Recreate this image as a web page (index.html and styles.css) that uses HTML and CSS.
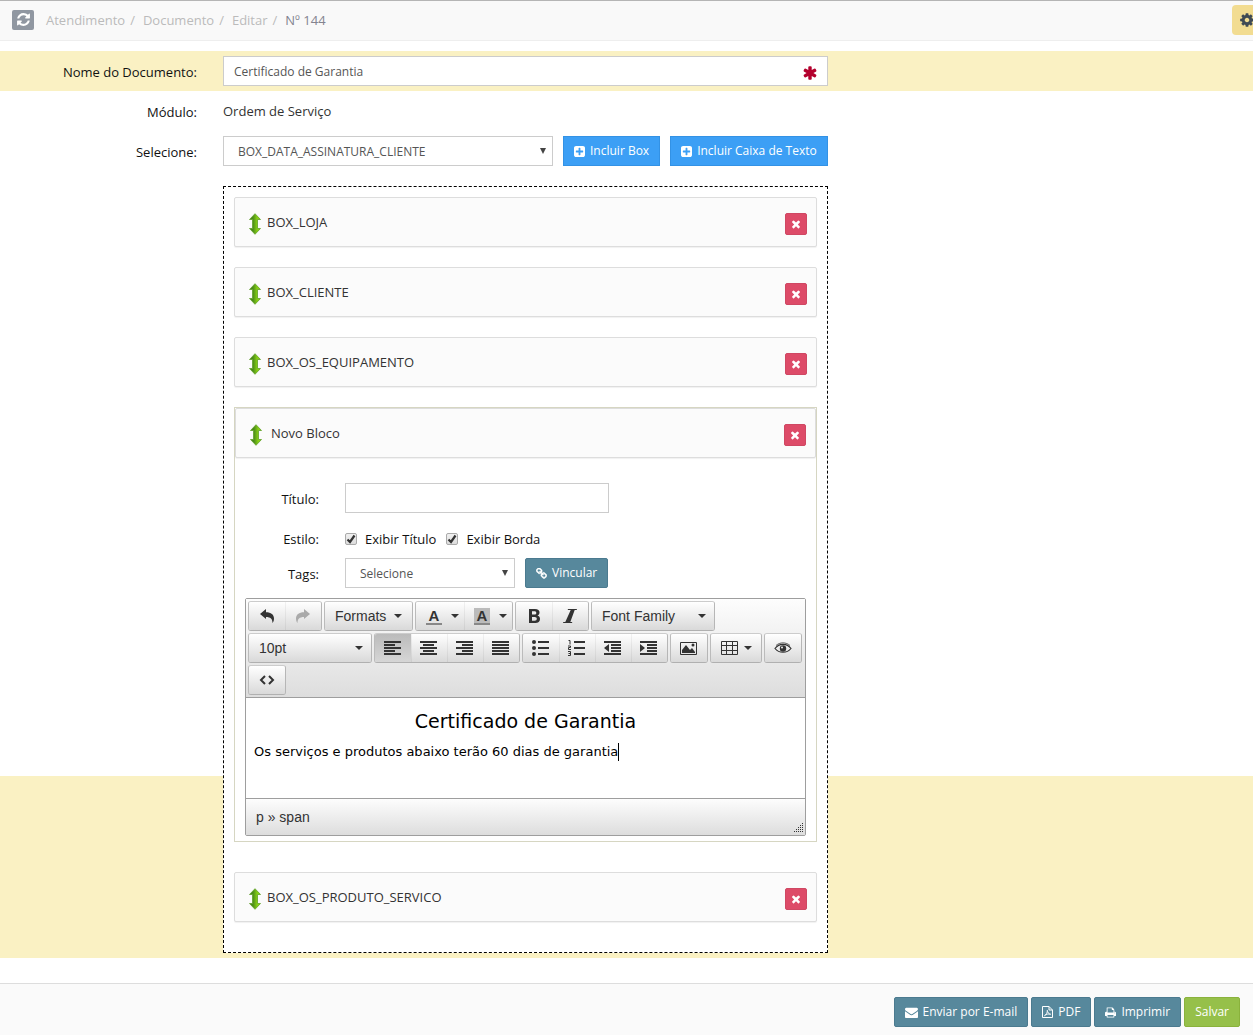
FILE: index.html
```html
<!DOCTYPE html>
<html lang="pt-BR">
<head>
<meta charset="utf-8">
<title>Documento Nº 144</title>
<meta name="viewport" content="width=device-width, initial-scale=1">
<link rel="stylesheet" href="styles.css">
</head>
<body>
<svg class="sprite" aria-hidden="true">
  <defs>
    <linearGradient id="green" x1="0" y1="0" x2="1" y2="0"><stop offset="0.3" stop-color="#4a8a1a"/><stop offset="0.7" stop-color="#86cf14"/></linearGradient>
  </defs>
  <symbol id="refresh" viewBox="0 0 1792 1792"><path d="M1639 1056q0 5-1 7-64 268-268 434.500t-478 166.500q-146 0-282.500-55t-243.500-157l-129 129q-19 19-45 19t-45-19-19-45v-448q0-26 19-45t45-19h448q26 0 45 19t19 45-19 45l-137 137q71 66 161 102t187 36q134 0 250-65t186-179q11-17 53-117 8-23 30-23h192q13 0 22.500 9.500t9.500 22.500zm25-800v448q0 26-19 45t-45 19h-448q-26 0-45-19t-19-45 19-45l138-138q-148-137-349-137-134 0-250 65t-186 179q-11 17-53 117-8 23-30 23h-199q-13 0-22.500-9.500t-9.500-22.500v-7q65-268 270-434.500t480-166.500q146 0 284 55.500t245 156.500l130-129q19-19 45-19t45 19 19 45z"/></symbol>
  <symbol id="cog" viewBox="0 0 1792 1792"><path d="M1152 896q0-106-75-181t-181-75-181 75-75 181 75 181 181 75 181-75 75-181zm512-109v222q0 12-8 23t-20 13l-185 28q-19 54-39 91 35 50 107 138 10 12 10 25t-9 23q-27 37-99 108t-94 71q-12 0-26-9l-138-108q-44 23-91 38-16 136-29 186-7 28-36 28h-222q-14 0-24.500-8.500t-11.500-21.500l-28-184q-49-16-90-37l-141 107q-10 9-25 9-14 0-25-11-126-114-165-168-7-10-7-23 0-12 8-23 15-21 51-66.500t54-70.500q-27-50-41-99l-183-27q-13-2-21-12.500t-8-23.500v-222q0-12 8-23t19-13l186-28q14-46 39-92-40-57-107-138-10-12-10-24 0-10 9-23 26-36 98.500-107.500t94.500-71.500q13 0 26 10l138 107q44-23 91-38 16-136 29-186 7-28 36-28h222q14 0 24.500 8.500t11.500 21.500l28 184q49 16 90 37l142-107q9-9 24-9 13 0 25 10 129 119 165 170 7 8 7 22 0 12-8 23-15 21-51 66.500t-54 70.500q26 50 41 98l183 28q13 2 21 12.500t8 23.500z"/></symbol>
  <symbol id="asterisk" viewBox="0 0 1792 1792"><path d="M1546 1050q46 26 59.500 77.500t-12.500 97.500l-64 110q-26 46-77.500 59.500t-97.500-12.500l-266-153v307q0 52-38 90t-90 38h-128q-52 0-90-38t-38-90v-307l-266 153q-46 26-97.500 12.500t-77.500-59.500l-64-110q-26-46-12.500-97.500t59.500-77.500l266-154-266-154q-46-26-59.500-77.500t12.500-97.500l64-110q26-46 77.500-59.500t97.500 12.500l266 153v-307q0-52 38-90t90-38h128q52 0 90 38t38 90v307l266-153q46-26 97.500-12.500t77.500 59.500l64 110q26 46 12.500 97.500t-59.500 77.500l-266 154z"/></symbol>
  <symbol id="plus" viewBox="128 128 1536 1536"><path d="M1408 960v-128q0-26-19-45t-45-19h-320v-320q0-26-19-45t-45-19h-128q-26 0-45 19t-19 45v320h-320q-26 0-45 19t-19 45v128q0 26 19 45t45 19h320v320q0 26 19 45t45 19h128q26 0 45-19t19-45v-320h320q26 0 45-19t19-45zm256-544v960q0 119-84.500 203.500t-203.500 84.500h-960q-119 0-203.500-84.500t-84.500-203.500v-960q0-119 84.500-203.500t203.500-84.500h960q119 0 203.500 84.500t84.500 203.500z"/></symbol>
  <symbol id="times" viewBox="0 0 1792 1792"><path d="M1490 1322q0 40-28 68l-136 136q-28 28-68 28t-68-28l-294-294-294 294q-28 28-68 28t-68-28l-136-136q-28-28-28-68t28-68l294-294-294-294q-28-28-28-68t28-68l136-136q28-28 68-28t68 28l294 294 294-294q28-28 68-28t68 28l136 136q28 28 28 68t-28 68l-294 294 294 294q28 28 28 68z"/></symbol>
  <symbol id="chain" viewBox="64 64 1664 1664"><path d="M1520 1216q0-40-28-68l-208-208q-28-28-68-28-42 0-72 32 3 3 19 18.500t21.500 21.500 15 19 13 25.500 3.500 27.500q0 40-28 68t-68 28q-15 0-27.500-3.500t-25.500-13-19-15-21.500-21.500-18.500-19q-33 31-33 73 0 40 28 68l206 207q27 27 68 27 40 0 68-26l147-146q28-28 28-67zm-703-705q0-40-28-68l-206-207q-28-28-68-28-39 0-68 27l-147 146q-28 28-28 67 0 40 28 68l208 208q27 27 68 27 42 0 72-31-3-3-19-18.500t-21.500-21.500-15-19-13-25.500-3.500-27.500q0-40 28-68t68-28q15 0 27.500 3.500t25.500 13 19 15 21.500 21.500 18.500 19q33-31 33-73zm895 705q0 120-85 203l-147 146q-83 83-203 83-121 0-204-85l-206-207q-83-83-83-203 0-123 88-209l-88-88q-86 88-208 88-120 0-204-84l-208-208q-84-84-84-204t85-203l147-146q83-83 203-83 121 0 204 85l206 207q83 83 83 203 0 123-88 209l88 88q86-88 208-88 120 0 204 84l208 208q84 84 84 204z" stroke="currentColor" stroke-width="60"/></symbol>
  <symbol id="envelope" viewBox="0 0 1792 1792"><path d="M1792 710v794q0 66-47 113t-113 47h-1472q-66 0-113-47t-47-113v-794q44 49 101 87 362 246 497 345 57 42 92.500 65.500t94.500 48 110 24.500h2q51 0 110-24.500t94.500-48 92.500-65.500q170-123 498-345 57-39 100-87zm0-294q0 79-49 151t-122 123q-376 261-468 325-10 7-42.500 31t-54 38.500-52 32.500-57.500 27-50 9h-2q-23 0-50-9t-57.500-27-52-32.500-54-38.500-42.500-31q-91-64-262-182.500t-205-142.500q-62-42-117-115.500t-55-136.500q0-78 41.500-130t118.500-52h1472q65 0 112.500 47t47.500 113z"/></symbol>
  <symbol id="print" viewBox="64 64 1664 1664"><path d="M448 1536h896v-256h-896v256zm0-640h896v-384h-160q-40 0-68-28t-28-68v-160h-640v640zm1152 64q0-26-19-45t-45-19-45 19-19 45 19 45 45 19 45-19 19-45zm128 0v416q0 13-9.500 22.500t-22.500 9.500h-224v160q0 40-28 68t-68 28h-960q-40 0-68-28t-28-68v-160h-224q-13 0-22.500-9.500t-9.500-22.500v-416q0-79 56.500-135.500t135.500-56.500h64v-544q0-40 28-68t68-28h672q40 0 88 20t76 48l152 152q28 28 48 76t20 88v256h64q79 0 135.500 56.500t56.500 135.500z"/></symbol>
  <symbol id="pdf" viewBox="0 0 11 12"><path d="M.5.500H7L10.500 4v7.500H.5zM7 .5V4h3.500" fill="none" stroke="currentColor"/><path d="M2.500 9.800c2-1.200 3-3.500 2.800-5.500M5.300 4.300c.2 2.200 1.600 3.800 3.400 4M2.500 9.500c1.500-1.400 4-1.800 6.200-1.300" fill="none" stroke="currentColor" stroke-width=".9"/></symbol>
  <symbol id="updown" viewBox="0 0 12 22"><path d="M6 .7L11.500 6.500H8.500V15.500H11.500L6 21.300.5 15.500H3.500V6.500H.5z" fill="url(#green)" stroke="#5f9f28" stroke-width=".8"/></symbol>
  <symbol id="undo" viewBox="0 0 16 16"><path d="M1 6l6-5v3.200c5 0 8 2.300 8 6.300 0 2-.7 3.500-1.600 4.500.3-4-2-6-6.400-6V11z"/></symbol>
  <symbol id="left" viewBox="1 0 18 16"><path d="M1 1h17v2H1zM1 4h11v2H1zM1 7h17v2H1zM1 10h11v2H1zM1 13h17v2H1z"/></symbol>
  <symbol id="center" viewBox="1 0 18 16"><path d="M1 1h17v2H1zM4 4h11v2H4zM1 7h17v2H1zM4 10h11v2H4zM1 13h17v2H1z"/></symbol>
  <symbol id="right" viewBox="1 0 18 16"><path d="M1 1h17v2H1zM7 4h11v2H7zM1 7h17v2H1zM7 10h11v2H7zM1 13h17v2H1z"/></symbol>
  <symbol id="justify" viewBox="1 0 18 16"><path d="M1 1h17v2H1zM1 4h17v2H1zM1 7h17v2H1zM1 10h17v2H1zM1 13h17v2H1z"/></symbol>
  <symbol id="bullets" viewBox="1 0 18 16"><circle cx="3" cy="2" r="2"/><circle cx="3" cy="8" r="2"/><circle cx="3" cy="14" r="2"/><path d="M7 1h11v2H7zM7 7h11v2H7zM7 13h11v2H7z"/></symbol>
  <symbol id="numbers" viewBox="1 0 18 16"><path d="M7 1h11v2H7zM7 7h11v2H7zM7 13h11v2H7z"/><path d="M1.500.5H3v4M1 6h2.500v1.500H1.500V9.500H4M1 11.500h2.500v4H1M1.500 13.500h2" fill="none" stroke="currentColor"/></symbol>
  <symbol id="outdent" viewBox="1 0 18 16"><path d="M1 1h17v2H1zM8 4h10v2H8zM8 7h10v2H8zM8 10h10v2H8zM1 13h17v2H1zM6 4v8L1 8z"/></symbol>
  <symbol id="indent" viewBox="1 0 18 16"><path d="M1 1h17v2H1zM8 4h10v2H8zM8 7h10v2H8zM8 10h10v2H8zM1 13h17v2H1zM1 4v8l5-4z"/></symbol>
  <symbol id="image" viewBox="1 0 18 16"><path d="M1.500 2.500h16v12h-16z" fill="none" stroke="currentColor"/><path d="M3 13V10l4-5 4 5 2-2 3 4v1z"/><circle cx="14" cy="5" r="1.500"/></symbol>
  <symbol id="table" viewBox="1 0 18 16"><path d="M1.500 1.500h16v13h-16zM1.500 5.500h16M1.500 10.500h16M6.500 1.500v13M12.500 1.500v13" fill="none" stroke="currentColor"/></symbol>
  <symbol id="eye" viewBox="0 0 18 16"><path d="M1 8.500C5 3 13 3 17 8.500 13 13.500 5 13.500 1 8.500z" fill="none" stroke="currentColor" stroke-width="1.200"/><circle cx="9" cy="8.500" r="3.200"/><circle cx="8" cy="7.500" r="1" fill="#eee"/><path d="M2 5.500C6 2 12 2 16 5.500" fill="none" stroke="currentColor" stroke-width=".8"/></symbol>
  <symbol id="code" viewBox="0 0 18 16"><path d="M7 4L3 8l4 4M11 4l4 4-4 4" fill="none" stroke="currentColor" stroke-width="2"/></symbol>
  <symbol id="bold" viewBox="0 0 16 16"><path fill-rule="evenodd" d="M3 1h6c3 0 4.500 1.400 4.500 3.600 0 1.500-.8 2.500-2 3 1.600.5 2.500 1.700 2.500 3.400C14 13.500 12.300 15 9.300 15H3zM6 3.300v3.300h2.300c1.300 0 2-.6 2-1.700s-.7-1.600-2-1.600zM6 8.900v3.800h2.600c1.500 0 2.200-.7 2.200-1.900s-.7-1.900-2.200-1.900z"/></symbol>
  <symbol id="italic" viewBox="0 0 16 16"><path d="M6 1h9l-.3 1h-2L8.300 14h2l-.3 1H1l.3-1h2L8.700 2h-3z"/></symbol>
</svg>

<header class="topbar">
  <button class="refresh" type="button" aria-label="Atualizar"><svg><use href="#refresh"/></svg></button>
  <nav class="crumbs" aria-label="Trilha">
    <a href="#">Atendimento</a><span class="sep">/</span>
    <a href="#">Documento</a><span class="sep">/</span>
    <a href="#">Editar</a><span class="sep">/</span>
    <span class="current">Nº 144</span>
  </nav>
  <button class="settings" type="button" aria-label="Configurações"><svg><use href="#cog"/></svg></button>
</header>

<main class="form">
  <div class="row row-highlight">
    <label class="label" for="nome">Nome do Documento:</label>
    <div class="field required">
      <input class="input" id="nome" type="text" value="Certificado de Garantia" required>
      <svg><use href="#asterisk"/></svg>
    </div>
  </div>
  <div class="row">
    <span class="label">Módulo:</span>
    <span class="value">Ordem de Serviço</span>
  </div>
  <div class="row">
    <label class="label" for="box">Selecione:</label>
    <div class="field controls">
      <div class="select select-wide"><select id="box"><option>BOX_DATA_ASSINATURA_CLIENTE</option></select></div>
      <button class="btn btn-blue" type="button"><svg><use href="#plus"/></svg>Incluir Box</button>
      <button class="btn btn-blue" type="button"><svg><use href="#plus"/></svg>Incluir Caixa de Texto</button>
    </div>
  </div>
  <div class="row row-zone">
    <section class="zone" aria-label="Blocos do documento">
      <div class="card"><svg class="handle"><use href="#updown"/></svg><span class="card-name">BOX_LOJA</span><button class="remove" type="button" aria-label="Remover"><svg><use href="#times"/></svg></button></div>
      <div class="card"><svg class="handle"><use href="#updown"/></svg><span class="card-name">BOX_CLIENTE</span><button class="remove" type="button" aria-label="Remover"><svg><use href="#times"/></svg></button></div>
      <div class="card"><svg class="handle"><use href="#updown"/></svg><span class="card-name">BOX_OS_EQUIPAMENTO</span><button class="remove" type="button" aria-label="Remover"><svg><use href="#times"/></svg></button></div>

      <div class="block">
        <div class="card card-head"><svg class="handle"><use href="#updown"/></svg><span class="card-name">Novo Bloco</span><button class="remove" type="button" aria-label="Remover"><svg><use href="#times"/></svg></button></div>
        <div class="block-form">
          <div class="block-row">
            <label class="label" for="titulo">Título:</label>
            <input class="input input-title" id="titulo" type="text">
          </div>
          <div class="block-row block-row-checks">
            <span class="label">Estilo:</span>
            <div class="checks">
              <label class="check"><input type="checkbox" checked>Exibir Título</label>
              <label class="check"><input type="checkbox" checked>Exibir Borda</label>
            </div>
          </div>
          <div class="block-row">
            <label class="label" for="tags">Tags:</label>
            <div class="controls">
              <div class="select select-tags"><select id="tags"><option>Selecione</option></select></div>
              <button class="btn btn-teal" type="button"><svg><use href="#chain"/></svg>Vincular</button>
            </div>
          </div>
        </div>

        <div class="editor">
          <div class="toolbar" role="toolbar">
            <div class="group">
              <button type="button" aria-label="Desfazer"><svg class="glyph"><use href="#undo"/></svg></button>
              <button type="button" aria-label="Refazer" disabled><svg class="glyph flip"><use href="#undo"/></svg></button>
            </div>
            <div class="group"><button class="menu menu-formats" type="button">Formats<i class="caret"></i></button></div>
            <div class="group">
              <button class="color" type="button" aria-label="Cor do texto"><b class="swatch">A</b><i class="caret"></i></button>
              <button class="color" type="button" aria-label="Cor de fundo"><b class="swatch swatch-back">A</b><i class="caret"></i></button>
            </div>
            <div class="group">
              <button type="button" aria-label="Negrito"><svg class="glyph"><use href="#bold"/></svg></button>
              <button type="button" aria-label="Itálico"><svg class="glyph"><use href="#italic"/></svg></button>
            </div>
            <div class="group"><button class="menu menu-fixed" type="button">Font Family<i class="caret"></i></button></div>
            <div class="group"><button class="menu menu-fixed" type="button">10pt<i class="caret"></i></button></div>
            <div class="group">
              <button class="active" type="button" aria-label="Alinhar à esquerda"><svg class="glyph"><use href="#left"/></svg></button>
              <button type="button" aria-label="Centralizar"><svg class="glyph"><use href="#center"/></svg></button>
              <button type="button" aria-label="Alinhar à direita"><svg class="glyph"><use href="#right"/></svg></button>
              <button type="button" aria-label="Justificar"><svg class="glyph"><use href="#justify"/></svg></button>
            </div>
            <div class="group">
              <button type="button" aria-label="Marcadores"><svg class="glyph"><use href="#bullets"/></svg></button>
              <button type="button" aria-label="Numeração"><svg class="glyph"><use href="#numbers"/></svg></button>
              <button type="button" aria-label="Diminuir recuo"><svg class="glyph"><use href="#outdent"/></svg></button>
              <button type="button" aria-label="Aumentar recuo"><svg class="glyph"><use href="#indent"/></svg></button>
            </div>
            <div class="group"><button type="button" aria-label="Imagem"><svg class="glyph"><use href="#image"/></svg></button></div>
            <div class="group"><button class="table" type="button" aria-label="Tabela"><svg class="glyph"><use href="#table"/></svg><i class="caret"></i></button></div>
            <div class="group"><button type="button" aria-label="Visualizar"><svg class="glyph"><use href="#eye"/></svg></button></div>
            <div class="group"><button type="button" aria-label="Código-fonte"><svg class="glyph"><use href="#code"/></svg></button></div>
          </div>
          <div class="canvas" contenteditable="true" spellcheck="false">
            <p class="doc-title">Certificado de Garantia</p>
            <p class="doc-text"><span class="typed">Os serviços e produtos abaixo terão 60 dias de garantia</span></p>
          </div>
          <div class="status">
            <span>p » span</span>
            <svg class="grip" viewBox="0 0 10 10"><path d="M9 .5h1M7 2.500h1M9 2.500h1M5 4.500h1M7 4.500h1M9 4.500h1M3 6.500h1M5 6.500h1M7 6.500h1M9 6.500h1M1 8.500h1M3 8.500h1M5 8.500h1M7 8.500h1M9 8.500h1" stroke="#333" fill="none"/></svg>
          </div>
        </div>
      </div>

      <div class="card"><svg class="handle"><use href="#updown"/></svg><span class="card-name">BOX_OS_PRODUTO_SERVICO</span><button class="remove" type="button" aria-label="Remover"><svg><use href="#times"/></svg></button></div>
    </section>
  </div>
</main>

<footer class="actions">
  <button class="btn btn-teal" type="button"><svg class="wide"><use href="#envelope"/></svg>Enviar por E-mail</button>
  <button class="btn btn-teal" type="button"><svg class="tall"><use href="#pdf"/></svg>PDF</button>
  <button class="btn btn-teal" type="button"><svg><use href="#print"/></svg>Imprimir</button>
  <button class="btn btn-green" type="submit">Salvar</button>
</footer>
</body>
</html>
```
FILE: styles.css
```css
* { box-sizing: border-box; }

body {
  margin: 0;
  min-height: 100vh;
  display: flex;
  flex-direction: column;
  background: #fff;
  color: #333;
  font: 13px/20px "Open Sans", sans-serif;
}

button, input, select { font: inherit; color: inherit; margin: 0; }
button { cursor: pointer; }
svg { display: block; flex: none; fill: currentColor; }
.sprite { position: absolute; width: 0; height: 0; }

/* Top bar */
.topbar {
  display: flex;
  align-items: center;
  height: 41px;
  padding: 0 0 2px 12px;
  background: #f9f9f9;
  border-top: 1px solid #b5b5b5;
  border-bottom: 1px solid #eee;
  overflow: hidden;
}
.refresh {
  display: grid;
  place-items: center;
  width: 22px;
  height: 20px;
  padding: 0;
  border: 0;
  border-radius: 2px;
  background: #9097a1;
  color: #fff;
}
.refresh svg { width: 15px; height: 15px; }
.crumbs { display: flex; flex: 1; padding-left: 12px; color: #bbb; }
.crumbs a { color: #bbb; text-decoration: none; }
.crumbs .sep { padding: 0 8px 0 5px; }
.crumbs .current { color: #848490; }
.settings {
  display: grid;
  place-items: center;
  width: 30px;
  height: 30px;
  margin-right: -9px;
  padding: 0;
  border: 0;
  border-radius: 4px;
  background: #f2dc91;
  color: #3f4a54;
}
.settings svg { width: 16px; height: 16px; }

/* Form rows */
.form { padding-top: 10px; }
.row {
  display: grid;
  grid-template-columns: 197px minmax(0, 605px);
  column-gap: 26px;
  min-height: 40px;
  padding: 5px 0;
}
.row-highlight { background: #faf1c3; }
.row-zone {
  margin-top: 10px;
  background: linear-gradient(to top, #faf1c3 182px, transparent 182px);
}
.label { color: #111; text-align: right; padding-top: 6px; }
.value { padding-top: 5px; }
.controls { display: flex; gap: 10px; }
.required { position: relative; }
.required svg {
  position: absolute;
  right: 10px;
  top: 9px;
  width: 16px;
  height: 16px;
  color: #b3002d;
}

.input, .select select {
  display: block;
  width: 100%;
  height: 30px;
  padding: 0 10px;
  border: 1px solid #ccc;
  border-radius: 0;
  background: #fff;
  color: #555;
  font-size: 12px;
}
.select { position: relative; }
.select select { appearance: none; padding: 2px 24px 0 14px; }
.select::after {
  content: "";
  position: absolute;
  right: 7px;
  top: 12px;
  border: 3px solid transparent;
  border-top: 6px solid #444;
  border-bottom: 0;
  pointer-events: none;
}
.select-wide { flex: 0 1 330px; }
.select-tags { width: 170px; }

.btn {
  display: flex;
  align-items: center;
  justify-content: center;
  gap: 5px;
  height: 30px;
  padding: 0 10px;
  border: 1px solid;
  border-radius: 2px;
  color: #fff;
  font-size: 12px;
  white-space: nowrap;
}
.btn svg { width: 11px; height: 11px; }
.btn .wide { width: 13px; height: 13px; }
.btn .tall { height: 12px; }
.btn-blue { background: #3c9ff5; border-color: #3392e5; border-radius: 0; }
.btn-teal { background: #57889c; border-color: #4b7a8f; }
.btn-green { background: #96c04a; border-color: #8ab23c; }

/* Drop zone */
.zone {
  grid-column: 2;
  padding: 10px;
  border: 1px dashed #000;
  background: #fff;
}
.card {
  display: flex;
  align-items: flex-start;
  gap: 6px;
  height: 50px;
  margin-bottom: 20px;
  padding: 15px 9px 0 14px;
  border: 1px solid #ddd;
  border-radius: 2px;
  background: #fbfbfb;
  box-shadow: 0 1px 1px rgba(0, 0, 0, .06);
}
.handle { width: 12px; height: 22px; }
.card-name { flex: 1; line-height: 18px; }
.remove {
  display: grid;
  place-items: center;
  width: 22px;
  height: 22px;
  padding: 0;
  border: 1px solid #cf4863;
  border-radius: 2px;
  background: #dd4b68;
  color: #fff;
}
.remove svg { width: 12px; height: 12px; }

.block { margin-bottom: 30px; border: 1px solid #d6d6c2; padding-bottom: 5px; }
.card-head { gap: 9px; margin: 0; }
.block-form { padding: 20px 10px 5px 0; }
.block-row {
  display: grid;
  grid-template-columns: 84px minmax(0, 1fr);
  column-gap: 26px;
  padding: 5px 0;
}
.block-row-checks { padding: 5px 0 4px; }
.input-title { max-width: 264px; }
.checks { display: flex; gap: 10px; padding-top: 6px; }
.check { display: flex; align-items: center; gap: 8px; color: #111; }
.check input {
  appearance: none;
  width: 12px;
  height: 12px;
  border: 1px solid #aaa;
  border-radius: 2px;
  background: linear-gradient(#f0f0f0, #ddd);
}
.check input:checked {
  background: url("data:image/svg+xml,%3Csvg xmlns='http://www.w3.org/2000/svg' viewBox='0 0 10 10'%3E%3Cpath d='M1.500 5.500L4 8 8.500 1.500' fill='none' stroke='%23333' stroke-width='2.200'/%3E%3C/svg%3E"), linear-gradient(#f0f0f0, #ddd);
}

/* Rich text editor */
.editor {
  margin: 0 10px;
  border: 1px solid #9e9e9e;
  border-radius: 2px;
  font: 14px/20px "Liberation Sans", Arial, sans-serif;
}
.toolbar {
  display: flex;
  flex-wrap: wrap;
  gap: 2px;
  padding: 2px;
  background: linear-gradient(#fdfdfd, #ddd);
  border-bottom: 1px solid #9e9e9e;
}
.group {
  display: flex;
  height: 30px;
  border: 1px solid;
  border-color: #ccc #b6b6b6 #b0b0b0 #bbb;
  border-radius: 3px;
  overflow: hidden;
}
.group button {
  display: flex;
  align-items: center;
  justify-content: center;
  gap: 6px;
  width: 36px;
  padding: 0;
  border: 0;
  background: linear-gradient(#fff, #d9d9d9);
  color: #333;
}
.group button + button { box-shadow: inset 1px 0 rgba(0, 0, 0, .05); }
.group button:disabled { color: #aaa; }
.group .active { background: linear-gradient(#bbb, #d6d6d6); }
.group .menu { padding: 0 10px; justify-content: space-between; }
.group .menu-formats { width: 87px; }
.group .menu-fixed { width: 122px; padding-right: 8px; }
.group .color { width: 48px; gap: 9px; padding-left: 5px; }
.group .table { width: 50px; gap: 5px; }
.glyph { width: 18px; height: 16px; }
.flip { transform: scaleX(-1); }
.caret { border: 4px solid transparent; border-top-color: #333; border-bottom: 0; }
.swatch { width: 16px; border-bottom: 2px solid #888; font-size: 15px; line-height: 15px; }
.swatch-back { background: #bbb; }
.canvas {
  height: 100px;
  padding: 10px 8px;
  background: #fff;
  color: #000;
  font-family: "DejaVu Sans", Verdana, sans-serif;
  outline: 0;
}
.canvas p { margin: 0; }
.doc-title { font-size: 19px; line-height: 26px; text-align: center; }
.doc-text { padding-top: 9px; font-size: 13px; line-height: 18px; }
.typed { display: inline-block; border-right: 1px solid #000; }
.status {
  display: flex;
  justify-content: space-between;
  padding: 8px 2px 8px 10px;
  border-top: 1px solid #9e9e9e;
  background: linear-gradient(#fdfdfd, #ddd);
}
.grip { align-self: flex-end; width: 10px; height: 10px; margin-bottom: -6px; }

/* Bottom actions */
.actions {
  display: flex;
  flex: 1;
  align-items: flex-start;
  justify-content: flex-end;
  gap: 3px;
  margin-top: 25px;
  padding: 13px 13px 8px;
  border-top: 1px solid #ddd;
  background: #fafafa;
}
```
